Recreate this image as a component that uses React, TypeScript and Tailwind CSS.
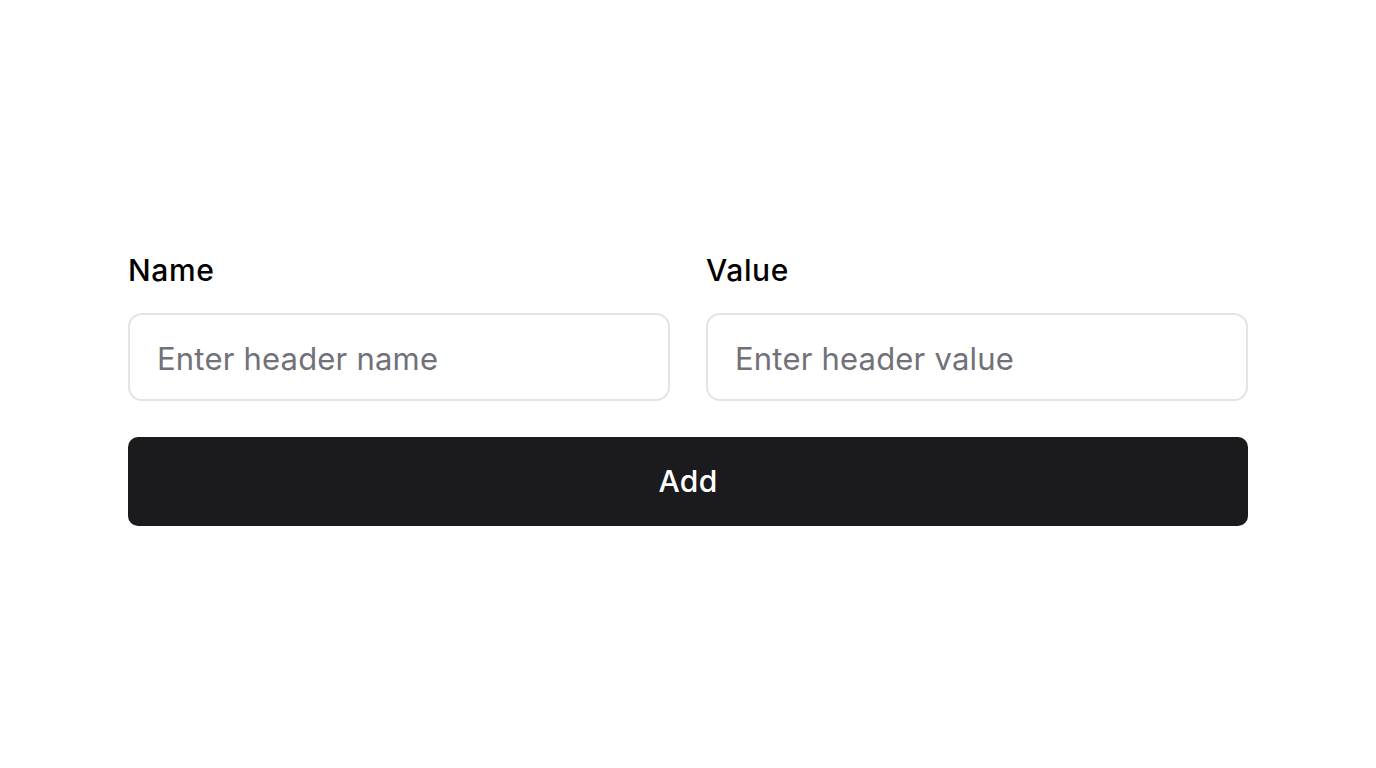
export default function App() {
  return (
    <div
      className="min-h-screen bg-white px-[128px] pt-[252px]"
      style={{ fontFamily: "Inter, 'Liberation Sans', sans-serif" }}
    >
      <div className="grid grid-cols-2 gap-x-[36px]">
        <div className="flex flex-col gap-[25px]">
          <label className="text-[30px] leading-[36px] font-medium tracking-[0.6px] text-black">Name</label>
          <input
            className="h-[88px] rounded-[14px] border-2 border-[#e4e4e7] px-[27px] pt-[3px] text-[31px] tracking-[0.2px] text-black outline-none placeholder:text-[#71717a]"
            placeholder="Enter header name"
          />
        </div>
        <div className="flex flex-col gap-[25px]">
          <label className="text-[30px] leading-[36px] font-medium tracking-[0.6px] text-black">Value</label>
          <input
            className="h-[88px] rounded-[14px] border-2 border-[#e4e4e7] px-[27px] pt-[3px] text-[31px] tracking-[0.2px] text-black outline-none placeholder:text-[#71717a]"
            placeholder="Enter header value"
          />
        </div>
      </div>
      <button className="mt-[36px] flex h-[89px] w-full items-center justify-center rounded-[10px] bg-[#1b1b1d] text-[30px] font-medium tracking-[0.3px] text-white">
        Add
      </button>
    </div>
  );
}
